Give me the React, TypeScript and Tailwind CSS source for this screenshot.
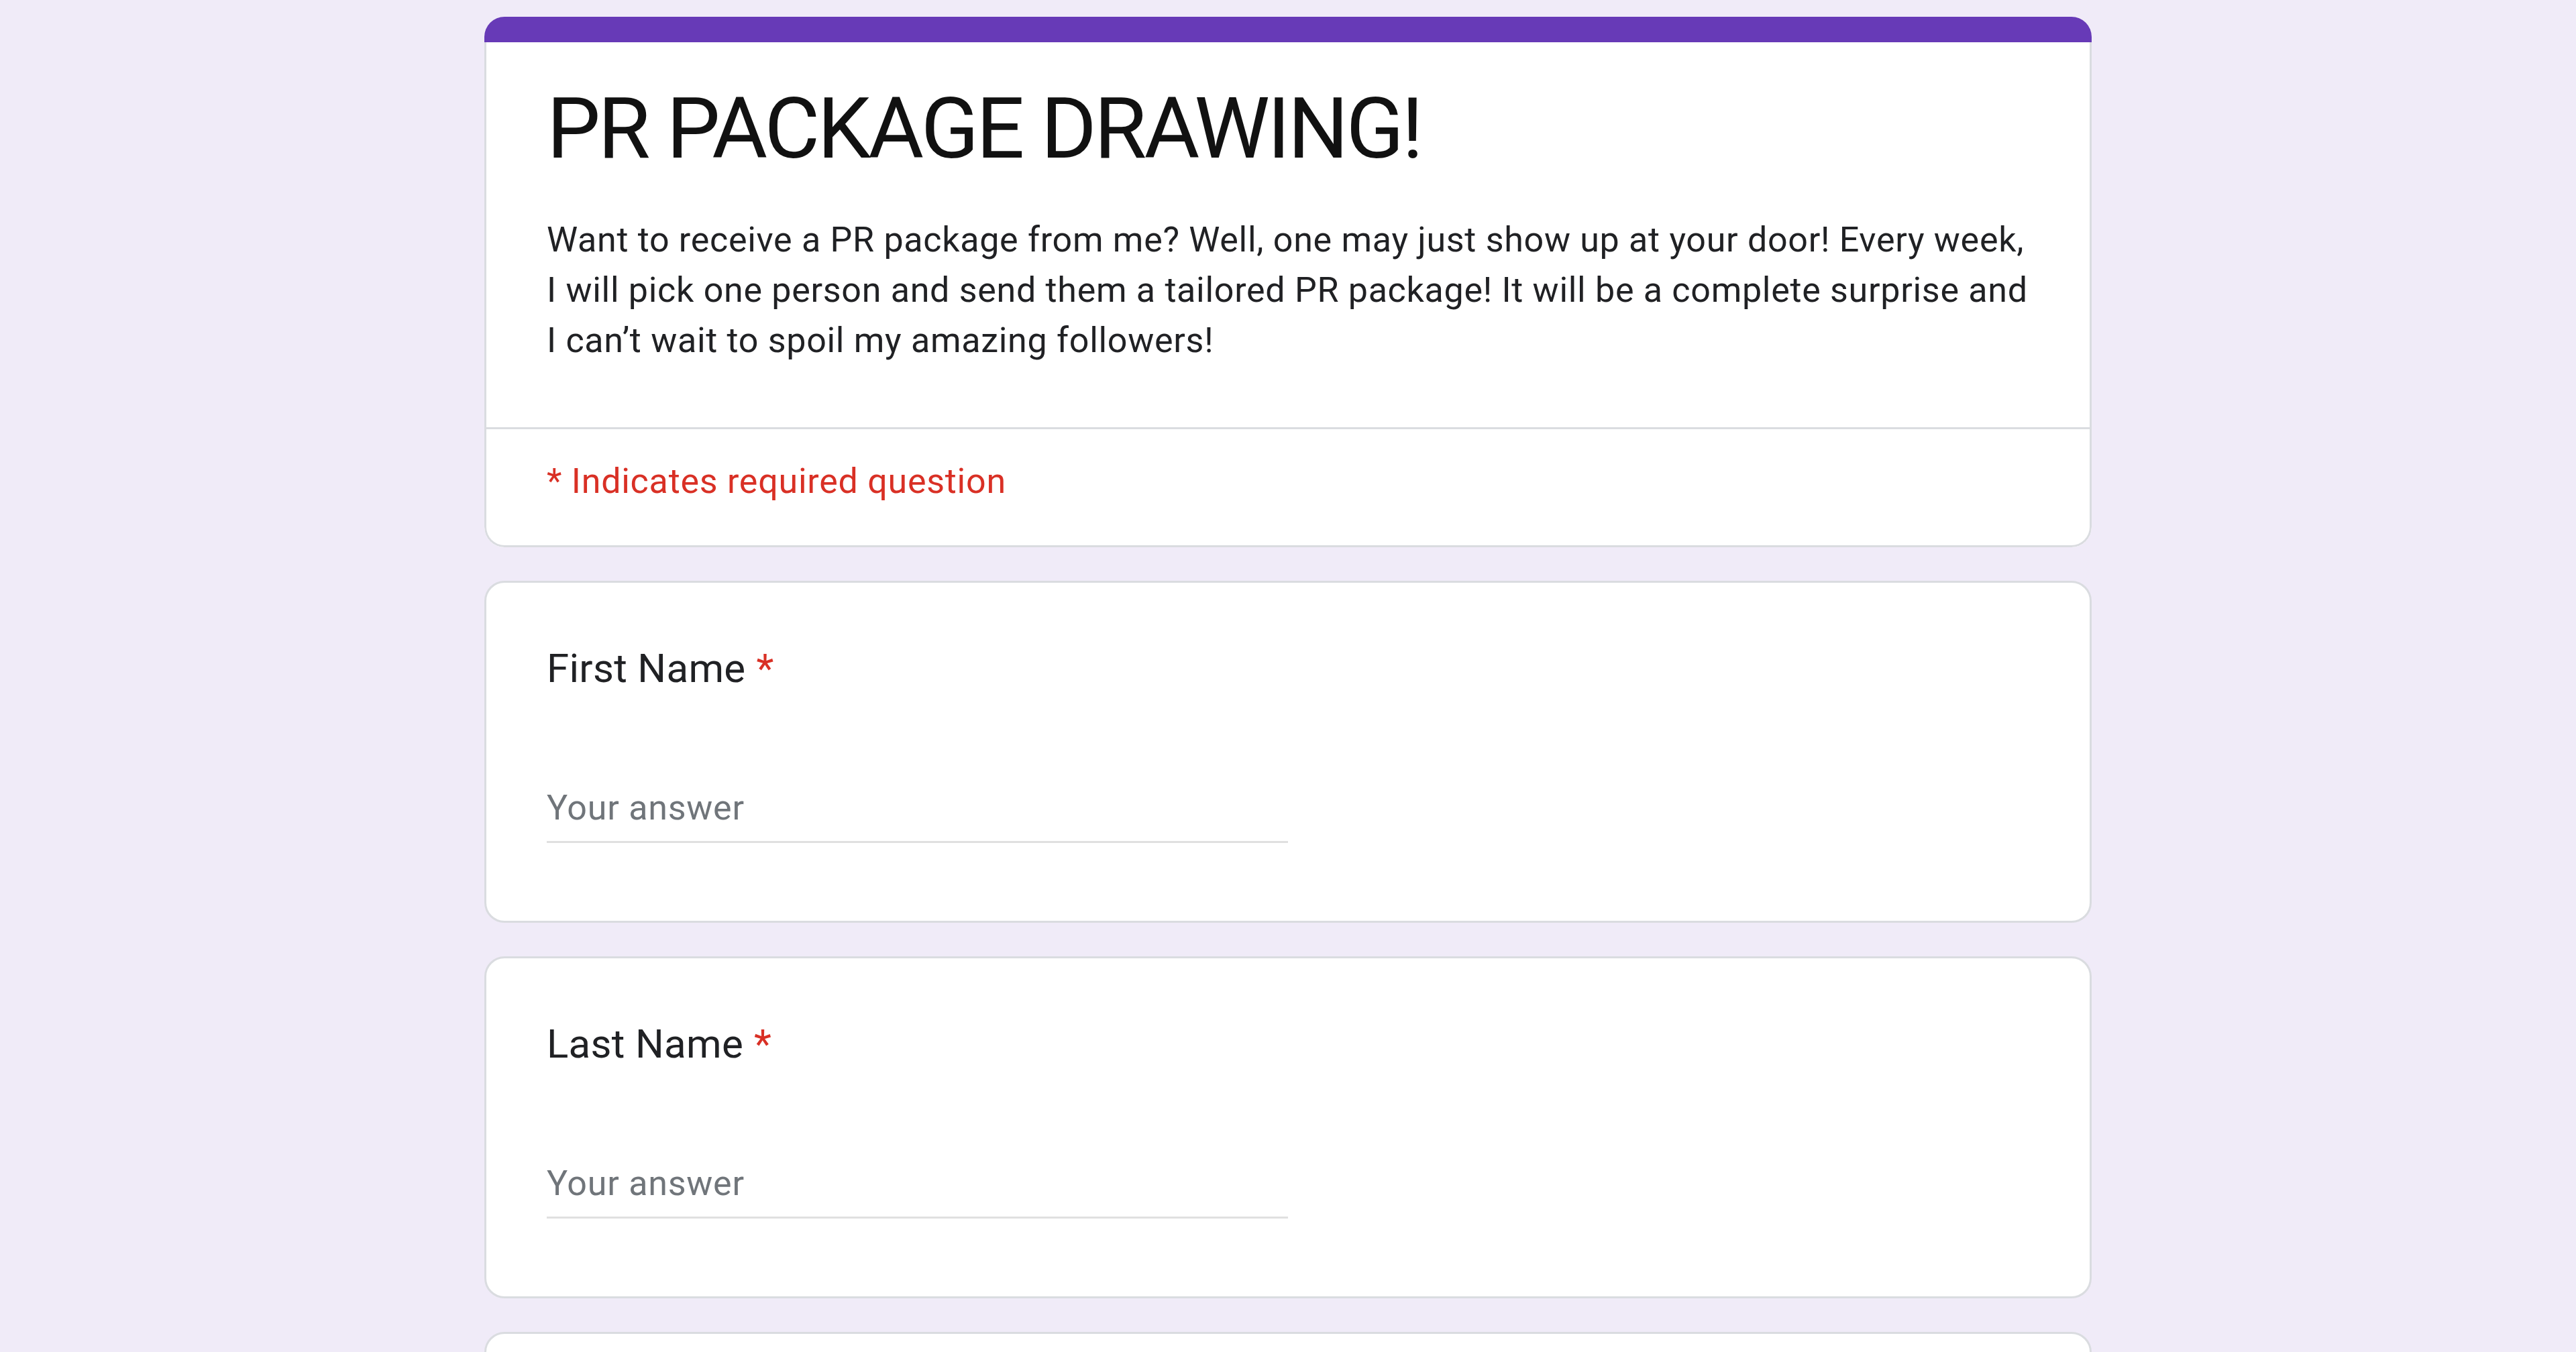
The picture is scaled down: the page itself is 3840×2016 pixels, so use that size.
import { ReactNode } from "react";

function Card({ children }: { children: ReactNode }) {
  return (
    <div className="w-full rounded-[30px] border-[3px] border-[#dadce0] bg-white">
      {children}
    </div>
  );
}

function Question({ label }: { label: string }) {
  return (
    <Card>
      <div className="px-[90px] pt-[83px] pb-[116px]">
        <p className="h-[90px] leading-[90px] text-[60px] tracking-[0.3px] text-[#202124]">
          {label}
          <span className="ml-[16px] text-[#d93025]">*</span>
        </p>
        <div className="mt-[125px] w-1/2 border-b-[3px] border-[#e0e0e0] pb-[12px]">
          <input
            type="text"
            placeholder="Your answer"
            className="w-full h-[75px] bg-transparent text-[52px] leading-[75px] tracking-[0.75px] text-[#202124] placeholder:text-[#70757a] outline-none"
          />
        </div>
      </div>
    </Card>
  );
}

export default function App() {
  return (
    <div
      className="min-h-screen bg-[#f0ebf8] pt-[25px] pb-[60px]"
      style={{ fontFamily: "Roboto, Arial, sans-serif" }}
    >
      <div className="mx-auto w-[2396px] flex flex-col gap-[50px]">
        <div className="rounded-[30px] overflow-hidden bg-white">
          <div className="h-[38px] bg-[#673ab7]" />
          <div className="border-x-[3px] border-b-[3px] border-[#dadce0] rounded-b-[30px]">
            <div className="px-[90px] pt-[54px] pb-[92px]">
              <h1 className="text-[127px] leading-[150px] tracking-[-0.03em] text-[#111] font-normal">
                PR PACKAGE DRAWING!
              </h1>
              <p className="mt-[53px] whitespace-nowrap text-[52px] leading-[75px] tracking-[0.7px] text-[#202124]">
                Want to receive a PR package from me? Well, one may just show up at your door! Every week,
                <br />
                I will pick one person and send them a tailored PR package! It will be a complete surprise and
                <br />
                I can’t wait to spoil my amazing followers!
              </p>
            </div>
            <div className="h-[3px] bg-[#dadce0]" />
            <div className="px-[90px] pt-[40px] pb-[58px]">
              <p className="text-[52px] leading-[75px] tracking-[0.75px] text-[#d93025]">
                * Indicates required question
              </p>
            </div>
          </div>
        </div>

        <Question label="First Name" />
        <Question label="Last Name" />
        <Question label="Email" />
      </div>
    </div>
  );
}
